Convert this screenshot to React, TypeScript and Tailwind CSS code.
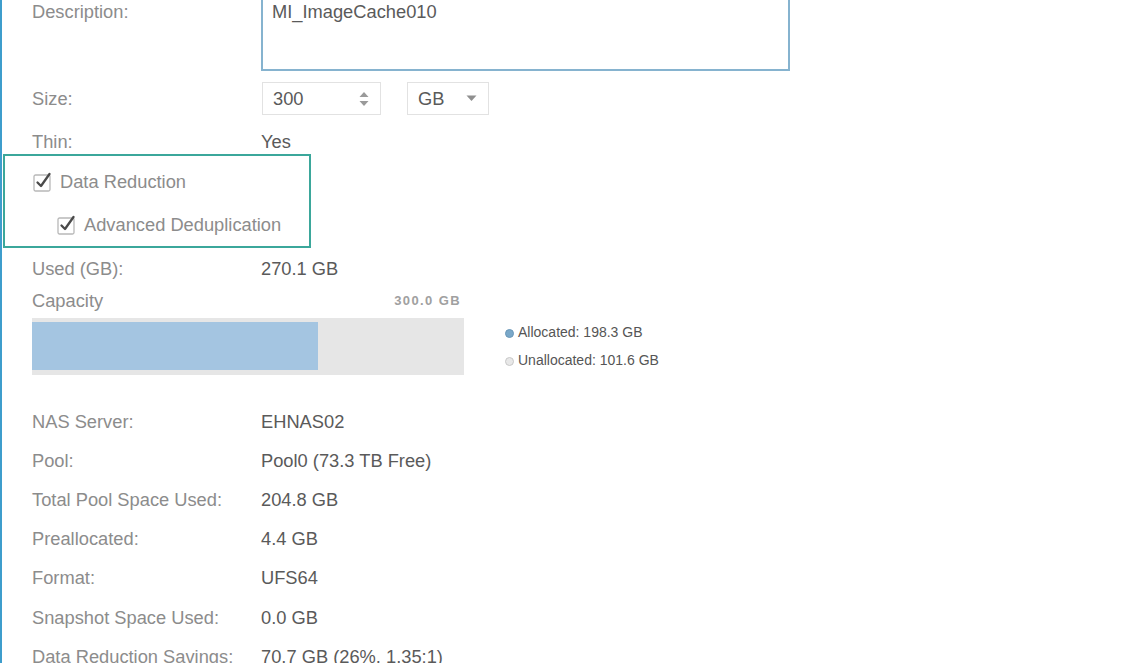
import React from 'react';

// Types
interface InfoRow {
  label: string;
  value: string;
}

// Data
const DETAIL_ROWS: InfoRow[] = [
  { label: 'NAS Server:', value: 'EHNAS02' },
  { label: 'Pool:', value: 'Pool0 (73.3 TB Free)' },
  { label: 'Total Pool Space Used:', value: '204.8 GB' },
  { label: 'Preallocated:', value: '4.4 GB' },
  { label: 'Format:', value: 'UFS64' },
  { label: 'Snapshot Space Used:', value: '0.0 GB' },
  { label: 'Data Reduction Savings:', value: '70.7 GB (26%, 1.35:1)' },
];

const ALLOCATED_PCT = 198.3 / 300;

// Components
const Label: React.FC<{ children: React.ReactNode }> = ({ children }) => (
  <div className="w-[229px] shrink-0 text-[#8c8c8c]">{children}</div>
);

const CheckIcon: React.FC = () => (
  <svg width="19" height="20" viewBox="0 0 19 20" className="shrink-0">
    <rect x="1" y="3" width="16" height="16" rx="1.5" fill="#fff" stroke="#b8b8b8" strokeWidth="1.3" />
    <path d="M4.5 10.5 L8 14 L16.5 2" fill="none" stroke="#4a4a4a" strokeWidth="2.3" strokeLinecap="round" strokeLinejoin="round" />
  </svg>
);

const Spinner: React.FC = () => (
  <svg width="12" height="18" viewBox="0 0 12 18">
    <path d="M1.5 7 L6 2 L10.5 7 Z" fill="#9a9a9a" />
    <path d="M1.5 11 L6 16 L10.5 11 Z" fill="#9a9a9a" />
  </svg>
);

const Caret: React.FC = () => (
  <svg width="11" height="7" viewBox="0 0 11 7">
    <path d="M0.5 0.5 L5.5 6 L10.5 0.5 Z" fill="#8f8f8f" />
  </svg>
);

export default function App() {
  return (
    <div
      className="w-[1148px] h-[663px] overflow-hidden bg-white border-l-2 border-[#3e9dcc] text-[18.3px] leading-[22px] text-[#5a5a5a]"
      style={{ fontFamily: '"Liberation Sans", Arial, sans-serif' }}
    >
      <div className="pl-[30px] flex flex-col">
        {/* Description */}
        <div className="flex -mt-[20px]">
          <div className="pt-[21px]">
            <Label>Description:</Label>
          </div>
          <div className="w-[529px] h-[91px] border-2 border-[#86b3cf] pl-[9px] pt-[19px]">
            MI_ImageCache010
          </div>
        </div>

        {/* Size */}
        <div className="flex items-center mt-[11px] h-[33px]">
          <Label>Size:</Label>
          <div className="ml-[1px] w-[119px] h-[33px] border border-[#e2e2e2] flex items-center justify-between pl-[10px] pr-[10px]">
            <span>300</span>
            <Spinner />
          </div>
          <div className="ml-[26px] w-[82px] h-[33px] border border-[#e2e2e2] flex items-center justify-between pl-[10px] pr-[11px]">
            <span>GB</span>
            <Caret />
          </div>
        </div>

        {/* Thin */}
        <div className="flex items-center mt-[16px] h-[22px]">
          <Label>Thin:</Label>
          <div>Yes</div>
        </div>

        {/* Data reduction options */}
        <div className="-ml-[29px] mt-[1px] w-[308px] h-[94px] border-2 border-[#3ba79b] flex flex-col text-[#8c8c8c]">
          <div className="flex items-center h-[30px] mt-[11px] pl-[28px] gap-[8px]">
            <CheckIcon />
            <span>Data Reduction</span>
          </div>
          <div className="flex items-center h-[30px] mt-[13px] pl-[52px] gap-[8px]">
            <CheckIcon />
            <span>Advanced Deduplication</span>
          </div>
        </div>

        {/* Used */}
        <div className="flex items-center mt-[10px] h-[22px]">
          <Label>Used (GB):</Label>
          <div>270.1 GB</div>
        </div>

        {/* Capacity */}
        <div className="flex items-center justify-between w-[432px] mt-[10px] h-[22px] pr-[3px]">
          <span className="text-[#8c8c8c]">Capacity</span>
          <span className="text-[13px] font-bold tracking-[1.4px] text-[#a0a0a0]">300.0 GB</span>
        </div>

        <div className="flex mt-[6px]">
          <div className="w-[432px] h-[57px] bg-[#e6e6e6] pt-[4px]">
            <div className="h-[48px] bg-[#a4c5e1]" style={{ width: `${Math.round(ALLOCATED_PCT * 432)}px` }} />
          </div>
          <div className="ml-[41px] flex flex-col text-[14px] leading-[18px] text-[#555] pt-[5px] gap-[10px]">
            <div className="flex items-center gap-[4px]">
              <span className="w-[9px] h-[9px] mt-[3px] rounded-full bg-[#7aa8c9] border border-[#6a97b8]" />
              <span>Allocated: 198.3 GB</span>
            </div>
            <div className="flex items-center gap-[4px]">
              <span className="w-[9px] h-[9px] mt-[3px] rounded-full bg-[#e8e8e8] border border-[#c8c8c8]" />
              <span>Unallocated: 101.6 GB</span>
            </div>
          </div>
        </div>

        {/* Details */}
        <div className="flex flex-col mt-[27px]">
          {DETAIL_ROWS.map((row) => (
            <div key={row.label} className="flex items-center h-[39.2px]">
              <Label>{row.label}</Label>
              <div>{row.value}</div>
            </div>
          ))}
        </div>
      </div>
    </div>
  );
}
